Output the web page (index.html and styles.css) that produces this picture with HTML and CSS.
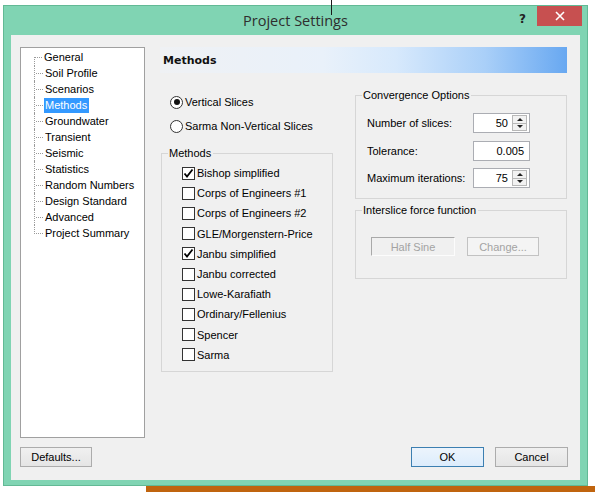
FILE: index.html
```html
<!DOCTYPE html>
<html>
<head>
<meta charset="utf-8">
<title>Project Settings</title>
<link rel="stylesheet" href="styles.css">
</head>
<body>
<div class="cursor-line"></div>
<div class="window">
  <div class="titlebar">
    <div></div>
    <div class="title">Project Settings</div>
    <div class="controls">
      <span class="help">?</span>
      <span class="close"><svg width="10" height="10" viewBox="0 0 10 10"><path d="M1 1L9 9M9 1L1 9" stroke="#fff" stroke-width="1.6" fill="none"/></svg></span>
    </div>
  </div>
  <div class="client">
    <div class="content">
      <ul class="tree">
        <li><span>General</span></li>
        <li><span>Soil Profile</span></li>
        <li><span>Scenarios</span></li>
        <li class="selected"><span>Methods</span></li>
        <li><span>Groundwater</span></li>
        <li><span>Transient</span></li>
        <li><span>Seismic</span></li>
        <li><span>Statistics</span></li>
        <li><span>Random Numbers</span></li>
        <li><span>Design Standard</span></li>
        <li><span>Advanced</span></li>
        <li><span>Project Summary</span></li>
      </ul>
      <div class="main">
        <div class="header">Methods</div>
        <div class="columns">
          <div class="left-col">
            <div class="radios">
              <div class="radio-row"><span class="radio checked"></span><span>Vertical Slices</span></div>
              <div class="radio-row"><span class="radio"></span><span>Sarma Non-Vertical Slices</span></div>
            </div>
            <fieldset class="group methods">
              <legend>Methods</legend>
              <div class="checks">
                <div class="check-row"><span class="box checked"><svg width="11" height="11" viewBox="0 0 11 11"><path d="M1.5 5.5L4 8.5L9.5 1.5" stroke="#000" stroke-width="1.8" fill="none"/></svg></span><span>Bishop simplified</span></div>
                <div class="check-row"><span class="box"></span><span>Corps of Engineers #1</span></div>
                <div class="check-row"><span class="box"></span><span>Corps of Engineers #2</span></div>
                <div class="check-row"><span class="box"></span><span>GLE/Morgenstern-Price</span></div>
                <div class="check-row"><span class="box checked"><svg width="11" height="11" viewBox="0 0 11 11"><path d="M1.5 5.5L4 8.5L9.5 1.5" stroke="#000" stroke-width="1.8" fill="none"/></svg></span><span>Janbu simplified</span></div>
                <div class="check-row"><span class="box"></span><span>Janbu corrected</span></div>
                <div class="check-row"><span class="box"></span><span>Lowe-Karafiath</span></div>
                <div class="check-row"><span class="box"></span><span>Ordinary/Fellenius</span></div>
                <div class="check-row"><span class="box"></span><span>Spencer</span></div>
                <div class="check-row"><span class="box"></span><span>Sarma</span></div>
              </div>
            </fieldset>
          </div>
          <div class="right-col">
            <fieldset class="group conv">
              <legend>Convergence Options</legend>
              <div class="fields">
                <span class="label">Number of slices:</span>
                <div class="input spin-input"><span class="val">50</span><span class="spin"><span class="up"></span><span class="down"></span></span></div>
                <span class="label">Tolerance:</span>
                <div class="input"><span class="val">0.005</span></div>
                <span class="label">Maximum iterations:</span>
                <div class="input spin-input"><span class="val">75</span><span class="spin"><span class="up"></span><span class="down"></span></span></div>
              </div>
            </fieldset>
            <fieldset class="group inter">
              <legend>Interslice force function</legend>
              <div class="inter-buttons">
                <div class="btn-disabled sunken">Half Sine</div>
                <div class="btn-disabled">Change...</div>
              </div>
            </fieldset>
          </div>
        </div>
      </div>
    </div>
    <div class="footer">
      <div class="btn defaults">Defaults...</div>
      <div class="btn ok">OK</div>
      <div class="btn cancel">Cancel</div>
    </div>
  </div>
</div>
<div class="taskbar"></div>
</body>
</html>
```

FILE: styles.css
```css
* { box-sizing: border-box; }
html, body { margin: 0; padding: 0; }
body {
  width: 595px;
  height: 492px;
  overflow: hidden;
  background: #ffffff;
  font-family: "Liberation Sans", Arial, sans-serif;
  font-size: 11px;
  color: #000;
  position: relative;
}
.cursor-line {
  position: absolute;
  left: 331px;
  top: 0;
  width: 1px;
  height: 15px;
  background: #1a1a1a;
  z-index: 5;
}
.window {
  margin: 5px 0 0 3px;
  width: 585px;
  height: 481px;
  border: 1px solid #62b995;
  background: #80d4b3;
  padding: 0 7px 5px 7px;
  display: flex;
  flex-direction: column;
}
.titlebar {
  height: 29px;
  flex: none;
  display: grid;
  grid-template-columns: 1fr auto 1fr;
}
.title {
  font-family: "Open Sans", "Noto Sans", sans-serif;
  font-size: 14.5px;
  color: #2e2e2e;
  line-height: 20px;
  padding-top: 5px;
  white-space: nowrap;
}
.controls {
  display: flex;
  justify-content: flex-end;
  align-items: flex-start;
  margin-right: -2px;
}
.help {
  font-family: "DejaVu Sans", sans-serif;
  font-weight: bold;
  font-size: 12px;
  color: #222;
  line-height: 14px;
  margin-top: 6px;
  margin-right: 11px;
}
.close {
  width: 45px;
  height: 20px;
  background: #c75050;
  display: flex;
  align-items: center;
  justify-content: center;
}
.client {
  flex: 1;
  background: #f0f0f0;
  padding: 12px 12px 0 9px;
  display: flex;
  flex-direction: column;
}
.content {
  display: flex;
  gap: 15px;
  height: 391px;
}
.tree {
  list-style: none;
  margin: 0;
  width: 125px;
  height: 391px;
  flex: none;
  background: #fff;
  border: 1px solid #a0a0a0;
  padding: 1px 0 0 13px;
}
.tree li {
  display: flex;
  height: 16px;
  align-items: center;
  white-space: nowrap;
}
.tree li::before {
  content: "";
  flex: none;
  align-self: stretch;
  width: 9px;
  border-left: 1px dotted #9a9a9a;
  background: repeating-linear-gradient(to right, #9a9a9a 0 1px, transparent 1px 2px) 1px 8px / 100% 1px no-repeat;
}
.tree li:first-child::before {
  border-left: none;
  background:
    repeating-linear-gradient(to right, #9a9a9a 0 1px, transparent 1px 2px) 1px 8px / 100% 1px no-repeat,
    repeating-linear-gradient(to bottom, #9a9a9a 0 1px, transparent 1px 2px) 0 8px / 1px 100% no-repeat;
}
.tree li:last-child::before {
  align-self: flex-start;
  height: 9px;
  background: repeating-linear-gradient(to right, #9a9a9a 0 1px, transparent 1px 2px) 1px 8px / 100% 1px no-repeat;
}
.tree li span {
  line-height: 15px;
  padding: 0 2px 0 1px;
}
.tree li.selected span {
  background: #3399ff;
  color: #fff;
}
.main {
  flex: 1;
  display: flex;
  flex-direction: column;
}
.header {
  height: 26px;
  margin-right: 1px;
  padding-left: 3px;
  display: flex;
  align-items: center;
  font-family: "DejaVu Sans", sans-serif;
  font-weight: bold;
  font-size: 11px;
  color: #111;
  background: linear-gradient(to right, #eff1f4 0%, #e9f1fa 40%, #d7e9fc 58%, #a9cff8 80%, #68a8f1 100%);
}
.columns {
  display: flex;
  gap: 22px;
}
.left-col {
  width: 172px;
  margin-left: 1px;
  flex: none;
}
.right-col {
  width: 212px;
  flex: none;
}
.radios {
  margin-top: 17px;
  padding-left: 9px;
}
.radio-row {
  height: 24px;
  display: flex;
  align-items: center;
  gap: 2px;
}
.radio {
  width: 13px;
  height: 13px;
  border: 1px solid #333;
  border-radius: 50%;
  background: #fff;
  display: flex;
  align-items: center;
  justify-content: center;
}
.radio.checked::after {
  content: "";
  width: 6px;
  height: 6px;
  border-radius: 50%;
  background: #111;
}
.group {
  margin: 0;
  padding: 0 0 0 6px;
  border: 1px solid #d6d6d6;
  min-inline-size: 0;
}
.group legend {
  padding: 0 2px 0 1px;
  line-height: 13px;
}
.methods {
  margin-top: 9px;
  padding-bottom: 6px;
}
.checks {
  margin-top: 3px;
  margin-left: 14px;
}
.check-row {
  height: 20.2px;
  display: flex;
  align-items: center;
  gap: 2px;
}
.box {
  width: 13px;
  height: 13px;
  border: 1px solid #333;
  background: #fff;
  display: flex;
  align-items: center;
  justify-content: center;
}
.conv {
  margin-top: 16px;
  padding-bottom: 10px;
}
.fields {
  margin-top: 11px;
  margin-left: 5px;
  display: grid;
  grid-template-columns: 106px 57px;
  grid-auto-rows: 20px;
  row-gap: 7.5px;
  align-items: center;
}
.input {
  height: 20px;
  border: 1px solid #abadb3;
  background: #fff;
  display: flex;
  align-items: center;
  justify-content: flex-end;
  padding-right: 5px;
}
.spin-input {
  padding-right: 2px;
}
.spin-input .val {
  margin-right: 4px;
}
.spin {
  width: 15px;
  height: 16px;
  display: flex;
  flex-direction: column;
}
.spin span {
  flex: 1;
  border: 1px solid #b8b8b8;
  background: #f2f2f2;
  display: flex;
  align-items: center;
  justify-content: center;
}
.spin .down { border-top: none; }
.spin .up::after {
  content: "";
  border-left: 3px solid transparent;
  border-right: 3px solid transparent;
  border-bottom: 3px solid #222;
}
.spin .down::after {
  content: "";
  border-left: 3px solid transparent;
  border-right: 3px solid transparent;
  border-top: 3px solid #222;
}
.inter {
  margin-top: 5px;
  padding-bottom: 22px;
}
.inter-buttons {
  margin-top: 20px;
  margin-left: 9px;
  display: flex;
  gap: 12px;
}
.btn-disabled {
  height: 19px;
  width: 72px;
  border: 1px solid #c2c2c2;
  background: #f4f4f4;
  color: #a3a3a3;
  display: flex;
  align-items: center;
  justify-content: center;
}
.btn-disabled.sunken {
  width: 84px;
  border-color: #a9a9a9 #fcfcfc #fcfcfc #a9a9a9;
  background: #f0f0f0;
}
.footer {
  margin-top: 9px;
  display: flex;
  gap: 11px;
}
.btn {
  height: 20px;
  width: 73px;
  border: 1px solid #acacac;
  background: linear-gradient(#f0f0f0, #e5e5e5);
  display: flex;
  align-items: center;
  justify-content: center;
}
.btn.defaults {
  width: 72px;
}
.btn.ok {
  margin-left: auto;
  border-color: #3c7fb1;
  background: linear-gradient(#ecf4fc, #dcecfc);
}
.taskbar {
  margin-left: 146px;
  height: 6px;
  background: #c0640e;
}
```
